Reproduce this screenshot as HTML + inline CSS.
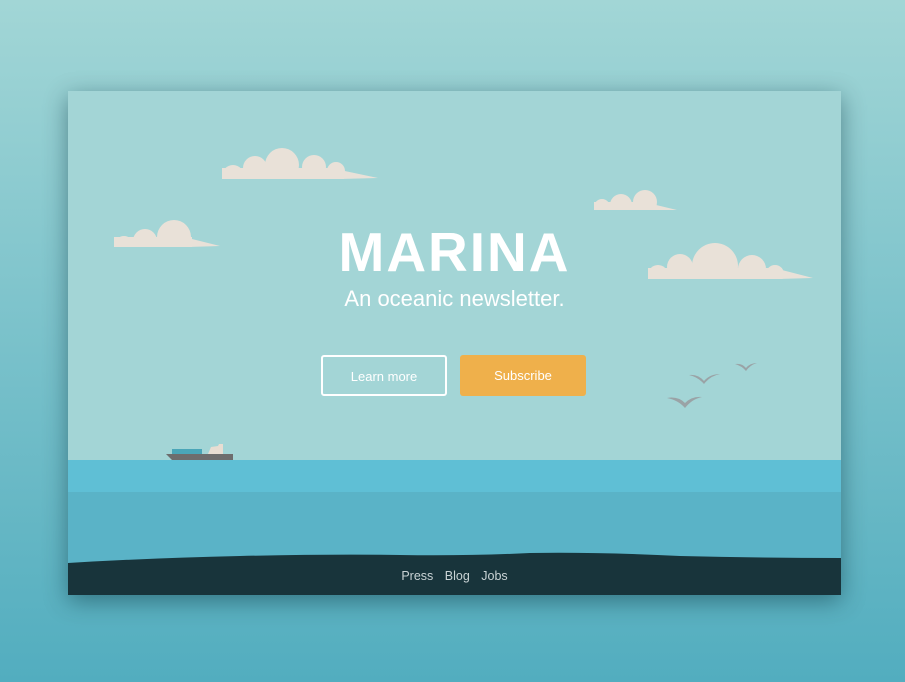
<!DOCTYPE html>
<html><head><meta charset="utf-8"><style>
html,body{margin:0;padding:0;width:905px;height:682px;overflow:hidden;}
body{background:linear-gradient(#a2d6d6,#52adbf);font-family:"Liberation Sans",sans-serif;position:relative;}
.card{position:absolute;left:68px;top:91px;width:773px;height:504px;overflow:hidden;box-shadow:0 6px 22px rgba(0,40,50,.45);background:#a3d5d6;}
svg{position:absolute;left:0;top:0;}
.t{position:absolute;left:0;width:773px;text-align:center;color:#fff;}
.btn{position:absolute;top:264px;width:126px;height:41px;box-sizing:border-box;border-radius:3px;color:#fff;font-size:13px;line-height:39px;text-align:center;}
.foot{position:absolute;top:478px;width:773px;text-align:center;color:#c9d3d5;font-size:12.5px;word-spacing:8px;}
</style></head><body>
<div class="card">
<svg width="773" height="504" viewBox="68 91 773 504">
<defs>
<clipPath id="c1"><rect x="0" y="0" width="900" height="179"/></clipPath>
<clipPath id="c2"><rect x="0" y="0" width="900" height="247"/></clipPath>
<clipPath id="c3"><rect x="0" y="0" width="900" height="210"/></clipPath>
<clipPath id="c4"><rect x="0" y="0" width="900" height="279"/></clipPath>
</defs>
<g fill="#e9e1d8">
<g clip-path="url(#c1)"><circle cx="233" cy="176" r="11"/><circle cx="255" cy="168" r="12"/><circle cx="282" cy="165" r="17"/><circle cx="314" cy="167" r="12"/><circle cx="336" cy="171" r="9"/>
<rect x="222" y="168" width="122" height="11"/><polygon points="340,170 378,178 340,179"/></g>
<g clip-path="url(#c2)"><circle cx="124" cy="245" r="9"/><circle cx="145" cy="241" r="12"/><circle cx="174" cy="237" r="17"/>
<rect x="114" y="237" width="78" height="10"/><polygon points="188,238 220,246 188,247"/></g>
<g clip-path="url(#c3)"><circle cx="602" cy="207" r="8"/><circle cx="621" cy="205" r="11"/><circle cx="645" cy="202" r="12"/>
<rect x="594" y="202" width="60" height="8"/><polygon points="652,204 677,210 652,210"/></g>
<g clip-path="url(#c4)"><circle cx="658" cy="275" r="10"/><circle cx="680" cy="267" r="13"/><circle cx="715" cy="266" r="23"/><circle cx="752" cy="269" r="14"/><circle cx="775" cy="274" r="9"/>
<rect x="648" y="268" width="134" height="11"/><polygon points="778,269 813,278 778,279"/></g>
</g>
<g fill="#9aa3a6">
<path d="M689 375 Q698 374 704 381 Q710 374 720 374 Q710 376 704 384 Q698 377 689 375Z"/>
<path d="M735 364 Q742 363 746 368 Q750 363 757 363 Q750 365 746 371 Q742 366 735 364Z"/>
<path d="M667 398 Q678 396 685 403 Q692 396 702 397 Q692 399 685 408 Q678 400 667 398Z"/>
</g>
<rect x="172" y="449" width="30" height="5" fill="#4aa6b8"/>
<path d="M208 454 L211 447 L218 446 L219 444 L223 444 L223 454Z" fill="#e8ddd2"/>
<path d="M166 454 L233 454 L233 460 L172 460Z" fill="#6d6d6d"/>
<rect x="68" y="460" width="773" height="32" fill="#5fbfd5"/>
<rect x="68" y="492" width="773" height="110" fill="#5ab3c7"/>
<path d="M68 563 Q150 558 240 556 Q330 554 400 555 Q470 556 530 553 Q600 552 680 556 Q760 558 841 558 L841 600 L68 600Z" fill="#18343b"/>
</svg>
<div class="t" style="top:130px;font-size:55px;font-weight:bold;letter-spacing:2px;line-height:62px;">MARINA</div>
<div class="t" style="top:195px;font-size:22px;line-height:26px;">An oceanic newsletter.</div>
<div class="btn" style="left:253px;border:2px solid #fff;">Learn more</div>
<div class="btn" style="left:392px;background:#efb04b;line-height:41px;">Subscribe</div>
<div class="foot">Press Blog Jobs</div>
</div>
</body></html>
